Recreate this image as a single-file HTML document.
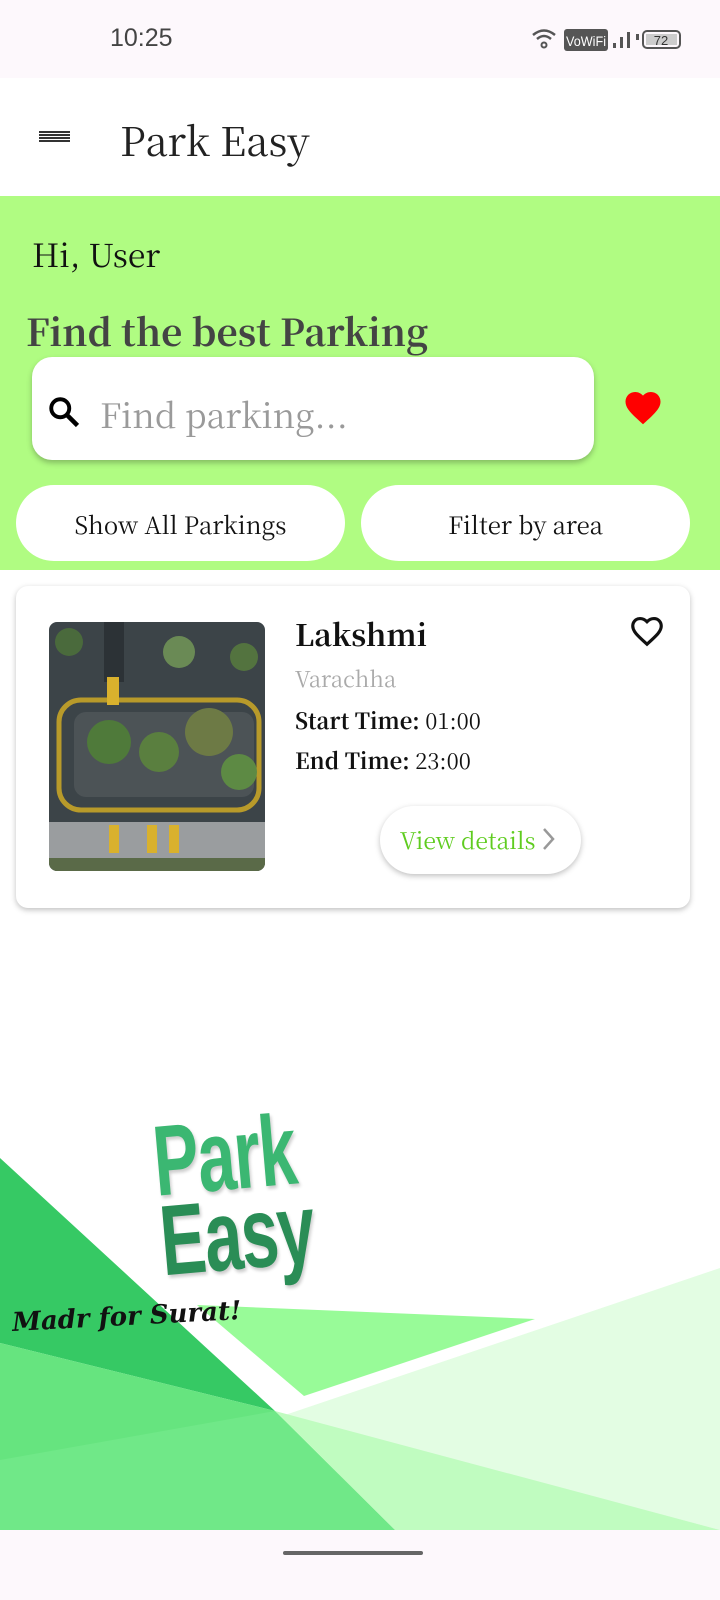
<!DOCTYPE html>
<html><head><meta charset="utf-8"><style>
*{margin:0;padding:0;box-sizing:border-box}
body{width:720px;height:1600px;overflow:hidden;background:#fff;position:relative;font-family:"Noto Serif CJK SC","DejaVu Serif","Liberation Serif",serif;color:#222}
.abs{position:absolute}
</style></head><body>
<div class="abs" style="left:0;top:0;width:720px;height:78px;background:#fdf8fc"></div>
<div class="abs" style="left:110px;top:24px;font-family:'Liberation Sans',sans-serif;font-size:25px;color:#444">10:25</div>
<svg class="abs" style="left:530px;top:26px" width="160" height="28" viewBox="0 0 160 28">
<path d="M3 9 Q14 0 25 9" stroke="#555" stroke-width="2.5" fill="none"/><path d="M7 13 Q14 7 21 13" stroke="#555" stroke-width="2.5" fill="none"/><circle cx="14" cy="19" r="2.5" fill="none" stroke="#555" stroke-width="2"/>
<rect x="34" y="3" width="44" height="22" rx="3" fill="#555"/><text x="56" y="20" font-family="Liberation Sans,sans-serif" font-size="14" fill="#fff" text-anchor="middle" textLength="40" lengthAdjust="spacingAndGlyphs">VoWiFi</text>
<rect x="83" y="17" width="3" height="5" fill="#555"/><rect x="90" y="11" width="3" height="11" fill="#555"/><rect x="97" y="6" width="3" height="16" fill="#555"/><rect x="106" y="8" width="3" height="6" fill="#555"/>
<rect x="113" y="5" width="37" height="17" rx="4" fill="none" stroke="#555" stroke-width="2"/><rect x="116" y="8" width="31" height="11" fill="#ccc"/><text x="131" y="19" font-family="Liberation Sans,sans-serif" font-size="13" fill="#333" text-anchor="middle">72</text></svg>
<div class="abs" style="left:39px;top:131px;width:31px;height:2px;background:#333;box-shadow:0 3px #333,0 6px #333,0 9px #333"></div>
<div class="abs" style="left:120px;top:112px;font-size:40px;color:#222;line-height:56px">Park Easy</div>
<div class="abs" style="left:0;top:196px;width:720px;height:374px;background:#b0fc82"></div>
<div class="abs" style="left:32px;top:232px;font-size:32px;line-height:44px;color:#111">Hi, User</div>
<div class="abs" style="left:26px;top:302px;font-size:37px;line-height:56px;font-weight:bold;color:#444">Find the best Parking</div>
<div class="abs" style="left:32px;top:357px;width:562px;height:103px;background:#fff;border-radius:20px;box-shadow:0 3px 6px rgba(0,0,0,.25)"></div>
<svg class="abs" style="left:46px;top:394px" width="36" height="36" viewBox="0 0 24 24"><circle cx="9.5" cy="9.5" r="6" fill="none" stroke="#000" stroke-width="2.6"/><path d="M14 14 L21 21" stroke="#000" stroke-width="3"/></svg>
<div class="abs" style="left:100px;top:390px;font-size:34px;line-height:48px;color:#9a9a9a">Find parking...</div>
<svg class="abs" style="left:622px;top:386px" width="42" height="40" viewBox="0 0 24 22"><path d="M12 21.4l-1.5-1.3C5.4 15.4 2 12.3 2 8.5 2 5.4 4.4 3 7.5 3c1.7 0 3.4.8 4.5 2.1C13.1 3.8 14.8 3 16.5 3 19.6 3 22 5.4 22 8.5c0 3.8-3.4 6.9-8.5 11.6L12 21.4z" fill="#f00"/></svg>
<div class="abs" style="left:16px;top:485px;width:329px;height:76px;background:#fff;border-radius:38px;text-align:center;line-height:78px;font-size:24px;color:#111">Show All Parkings</div>
<div class="abs" style="left:361px;top:485px;width:329px;height:76px;background:#fff;border-radius:38px;text-align:center;line-height:78px;font-size:24px;color:#111">Filter by area</div>
<div class="abs" style="left:16px;top:586px;width:674px;height:322px;background:#fff;border-radius:12px;box-shadow:0 2px 6px rgba(0,0,0,.25)"></div>
<svg class="abs" style="left:49px;top:622px;border-radius:8px" width="216" height="249" viewBox="0 0 216 249">
<rect width="216" height="249" fill="#3c4448"/>
<rect x="55" y="0" width="20" height="60" fill="#2c3236"/>
<rect x="10" y="78" width="200" height="110" rx="22" fill="none" stroke="#b89a2a" stroke-width="5"/>
<rect x="25" y="90" width="180" height="85" rx="12" fill="#4c5356"/>
<circle cx="60" cy="120" r="22" fill="#4f7a3a"/><circle cx="110" cy="130" r="20" fill="#5a7f3f"/><circle cx="160" cy="110" r="24" fill="#6d7a45"/><circle cx="190" cy="150" r="18" fill="#5d8a44"/>
<circle cx="20" cy="20" r="14" fill="#4a6a3c"/><circle cx="130" cy="30" r="16" fill="#6a8a55"/><circle cx="195" cy="35" r="14" fill="#53733f"/>
<rect x="0" y="200" width="216" height="36" fill="#e7e7e7" opacity=".55"/>
<rect x="60" y="203" width="10" height="28" fill="#d9b12d"/><rect x="98" y="203" width="10" height="28" fill="#d9b12d"/><rect x="120" y="203" width="10" height="28" fill="#d9b12d"/>
<rect x="0" y="236" width="216" height="13" fill="#5a6a48"/>
<rect x="58" y="55" width="12" height="28" fill="#d9b12d"/>
</svg>
<div class="abs" style="left:295px;top:612px;font-size:30px;line-height:42px;font-weight:bold;color:#111">Lakshmi</div>
<div class="abs" style="left:295px;top:663px;font-size:22px;line-height:32px;color:#aaa">Varachha</div>
<div class="abs" style="left:295px;top:705px;font-size:22px;line-height:32px;color:#111"><b>Start Time:</b> 01:00</div>
<div class="abs" style="left:295px;top:745px;font-size:22px;line-height:32px;color:#111"><b>End Time:</b> 23:00</div>
<svg class="abs" style="left:628px;top:612px" width="38" height="36" viewBox="0 0 24 22"><path d="M12 20l-1.3-1.2C6 14.5 3 11.8 3 8.5 3 5.8 5 3.8 7.6 3.8c1.6 0 3.2.8 4.4 2 1.2-1.2 2.8-2 4.4-2C19 3.8 21 5.8 21 8.5c0 3.3-3 6-7.7 10.3L12 20z" fill="none" stroke="#111" stroke-width="2"/></svg>
<div class="abs" style="left:380px;top:806px;width:201px;height:68px;background:#fff;border-radius:34px;box-shadow:0 2px 6px rgba(0,0,0,.25)"></div>
<div class="abs" style="left:400px;top:823px;font-size:23px;line-height:34px;color:#5fcc1f">View details</div>
<svg class="abs" style="left:540px;top:826px" width="18" height="26" viewBox="0 0 18 26"><path d="M4 3 L13 13 L4 23" stroke="#999" stroke-width="2.5" fill="none"/></svg>
<svg class="abs" style="left:0;top:1100px" width="720" height="430" viewBox="0 1100 720 430">
<polygon points="0,1158 275,1411 0,1343" fill="#36c964"/>
<polygon points="0,1343 275,1411 395,1530 0,1530" fill="#66e47f"/>
<polygon points="0,1460 275,1411 395,1530 0,1530" fill="#70e888"/>
<polygon points="285,1415 720,1268 720,1530" fill="#e3fde3"/>
<polygon points="275,1411 720,1530 395,1530" fill="#c0fcc0"/>
<polygon points="197,1305 535,1319 304,1396" fill="#98fb98"/>
</svg>
<div class="abs" style="left:150px;top:1122px;transform:rotate(-5deg) scaleX(0.68);transform-origin:left top;font-family:'Liberation Sans',sans-serif;font-weight:bold;font-size:100px;line-height:80px;letter-spacing:-2px;text-shadow:2px 3px 4px rgba(0,0,0,.2)"><div style="color:#3bb772">Park</div><div style="color:#2a8d56">Easy</div></div>
<div class="abs" style="left:12px;top:1302px;font-family:'DejaVu Serif',serif;font-style:italic;font-weight:bold;font-size:26px;color:#111;transform:rotate(-3deg)">Madr for Surat!</div>
<div class="abs" style="left:0;top:1530px;width:720px;height:70px;background:#fdf8fc"></div>
<div class="abs" style="left:283px;top:1551px;width:140px;height:4px;border-radius:2px;background:#666"></div>
</body></html>
